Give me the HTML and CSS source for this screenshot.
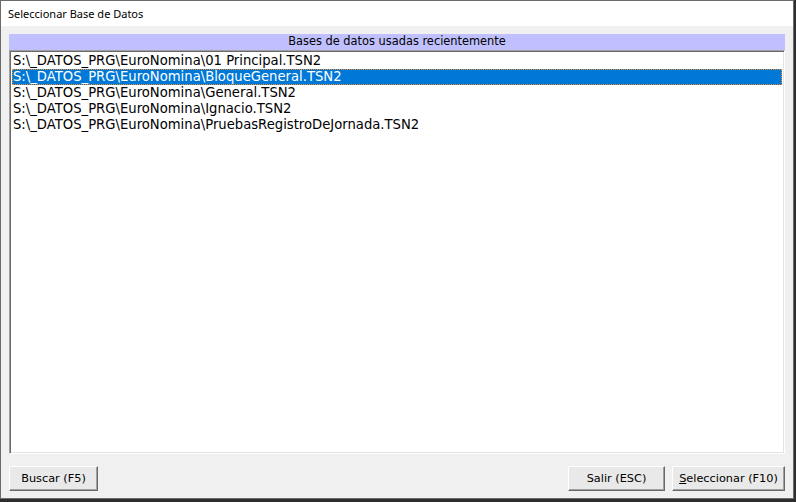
FILE: index.html
```html
<!DOCTYPE html>
<html>
<head>
<meta charset="utf-8">
<link rel="stylesheet" href="styles.css">
</head>
<body>
<div class="window">
  <div class="titlebar">Seleccionar Base de Datos</div>
  <div class="client">
    <div class="header">Bases de datos usadas recientemente</div>
    <div class="list">
      <div class="row">S:\_DATOS_PRG\EuroNomina\01 Principal.TSN2</div>
      <div class="row selected">S:\_DATOS_PRG\EuroNomina\BloqueGeneral.TSN2</div>
      <div class="row">S:\_DATOS_PRG\EuroNomina\General.TSN2</div>
      <div class="row">S:\_DATOS_PRG\EuroNomina\Ignacio.TSN2</div>
      <div class="row">S:\_DATOS_PRG\EuroNomina\PruebasRegistroDeJornada.TSN2</div>
    </div>
    <div class="buttons">
      <button class="btn btn-buscar">Buscar (F5)</button>
      <div class="spacer"></div>
      <button class="btn btn-salir">Salir (ESC)</button>
      <button class="btn btn-sel"><u>S</u>eleccionar (F10)</button>
    </div>
  </div>
</div>
</body>
</html>
```
FILE: styles.css
```css
* { box-sizing: border-box; }
html, body { margin: 0; padding: 0; }
body {
  width: 796px;
  height: 502px;
  background: #2e2e2e;
  overflow: hidden;
}
.window {
  width: 794px;
  height: 499px;
  border: 1px solid #6b6b6b;
  display: flex;
  flex-direction: column;
  background: #f0f0f0;
}
.titlebar {
  height: 25px;
  background: #ffffff;
  font-family: "Noto Sans", "DejaVu Sans", sans-serif;
  font-size: 11px;
  color: #000;
  padding-left: 7px;
  line-height: 25px;
  flex: none;
}
.client {
  flex: 1;
  display: flex;
  flex-direction: column;
  padding: 8px 8px 0 8px;
}
.header {
  height: 16px;
  background: #c0c0ff;
  text-align: center;
  font-family: "DejaVu Sans", sans-serif;
  font-size: 11.4px;
  line-height: 15px;
  color: #000;
  flex: none;
}
.list {
  height: 404px;
  background: #fff;
  border-top: 1px solid #a0a0a0;
  border-left: 1px solid #a0a0a0;
  border-right: 1px solid #fff;
  border-bottom: 1px solid #fff;
  box-shadow: inset 1px 1px 0 #696969, inset -1px -1px 0 #e3e3e3;
  padding: 2px 2px;
  flex: none;
}
.row {
  height: 16px;
  line-height: 16px;
  font-family: "DejaVu Sans", sans-serif;
  font-size: 13.2px;
  color: #000;
  padding-left: 1px;
  white-space: nowrap;
}
.row.selected {
  background: #0078d7;
  color: #fff;
  outline: 1px dotted #f08a24;
  outline-offset: -1px;
}
.buttons {
  display: flex;
  margin-top: 12px;
  gap: 7px;
}
.spacer { flex: 1; }
.btn {
  height: 25px;
  background: #e9e9e9;
  border-top: 1px solid #ffffff;
  border-left: 1px solid #ffffff;
  border-right: 1px solid #696969;
  border-bottom: 1px solid #696969;
  box-shadow: inset -1px -1px 0 #a0a0a0;
  font-family: "DejaVu Sans", sans-serif;
  font-size: 11.3px;
  color: #000;
  padding: 0;
  margin: 0;
}
.btn-buscar { width: 89px; }
.btn-salir { width: 97px; }
.btn-sel { width: 113px; }
```
